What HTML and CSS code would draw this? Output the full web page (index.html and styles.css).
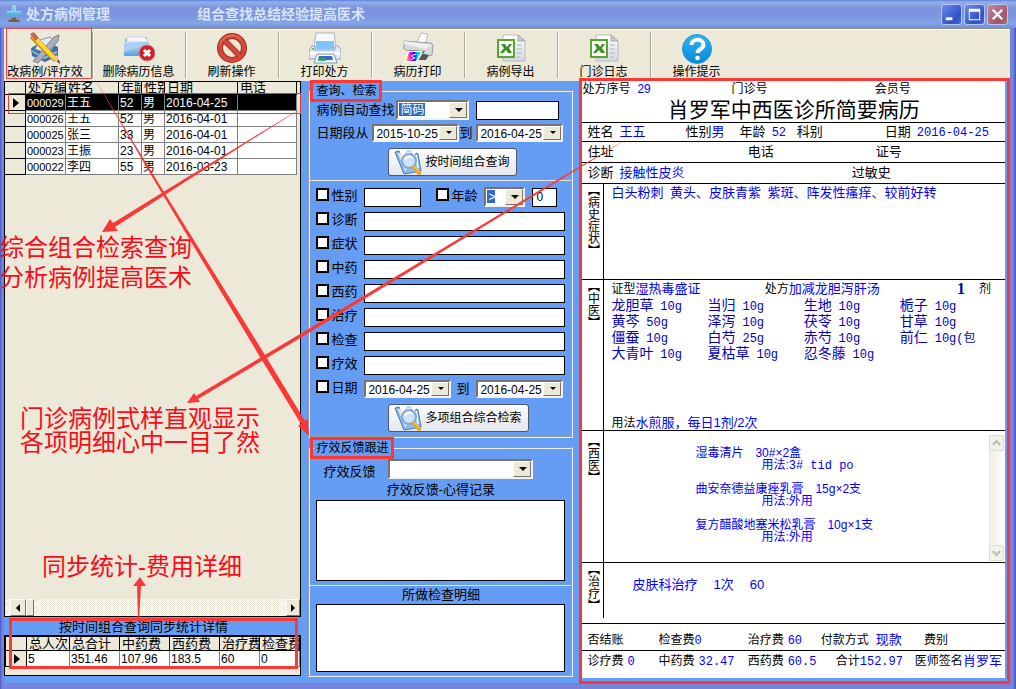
FILE: index.html
```html
<!DOCTYPE html>
<html lang="zh-CN">
<head>
<meta charset="utf-8">
<title>处方病例管理</title>
<link rel="stylesheet" href="styles.css">
</head>
<body>
<svg class="defs" aria-hidden="true">
  <defs>
    <linearGradient id="gSheet" x1="0" y1="0" x2="0" y2="1"><stop offset="0" stop-color="#ffffff"/><stop offset="1" stop-color="#d3d8df"/></linearGradient>
    <linearGradient id="gBlue" x1="0" y1="0" x2="0" y2="1"><stop offset="0" stop-color="#cfe6fb"/><stop offset="1" stop-color="#5a9fe0"/></linearGradient>
    <linearGradient id="gHelp" x1="0" y1="0" x2="0" y2="1"><stop offset="0" stop-color="#33b5f4"/><stop offset="1" stop-color="#0389dc"/></linearGradient>
    <linearGradient id="gRain" x1="0" y1="0" x2="1" y2="0"><stop offset="0" stop-color="#ffe600"/><stop offset=".3" stop-color="#f0f"/><stop offset=".55" stop-color="#20f"/><stop offset=".8" stop-color="#0ee"/><stop offset="1" stop-color="#2d2"/></linearGradient>
    <symbol id="excel" viewBox="0 0 32 32">
      <path d="M8 3h15l7 6v20H8z" fill="url(#gSheet)" stroke="#b9bcc0"/>
      <path d="M23 3v6h7z" fill="#c8ccd0" stroke="#a7abb0"/>
      <path d="M22 13h5M22 17h5M22 21h5M22 25h3" stroke="#aeb4ba"/>
      <rect x="3" y="8" width="16" height="17" fill="#fff" stroke="#58a532" stroke-width="2"/>
      <path d="M6 12h4l2 3 2-3h3l-3 4 3 5h-4l-2-3-3 3H5l4-5z" fill="#3d8f22"/>
    </symbol>
    <symbol id="search" viewBox="0 0 28 26">
      <path d="M1 3l4-1 6 17 9-1 2-14 2 1 3 17-17 3z" fill="#8fbbea" stroke="#4674b8"/>
      <path d="M5 4l7 17M22 6l2 13" stroke="#e8f4ff" stroke-width="2"/>
      <path d="M12 7c0-7 6-7 6 0" fill="#edf4fb" stroke="#9bb4cf"/>
      <circle cx="15" cy="12" r="7" fill="#c9e4fc" stroke="#86a6cc" stroke-width="2"/>
      <path d="M11 11c1-4 5-4 7-2" fill="none" stroke="#fff" stroke-width="2"/>
      <path d="M20 18l5 6" stroke="#e9a325" stroke-width="4" stroke-linecap="round"/>
      <path d="M20 17l5 6" stroke="#ffe08a"/>
    </symbol>
  </defs>
</svg>
<div class="window">
  <header class="titlebar">
    <svg class="app-icon" viewBox="0 0 16 16"><path d="M1 5h5V0h4v5h5v4h-5v4H6V9H1z" fill="#5cb4dc"/><path d="M2 6h5V1h2v5h5" fill="none" stroke="#b5e2f4"/><path d="M6 11h4v2h3v2H3v-2h3z" fill="#7b6039"/></svg>
    <h1 class="app-name">处方病例管理</h1>
    <span class="app-slogan">组合查找总结经验提高医术</span>
    <div class="window-buttons">
      <button class="win-btn" aria-label="最小化"><svg viewBox="0 0 20 20"><path d="M4 13h7v3H4z" fill="#fff"/></svg></button>
      <button class="win-btn" aria-label="最大化"><svg viewBox="0 0 20 20"><path d="M4 4h12v12H4zM5 7v8h10V7z" fill="#fff" fill-rule="evenodd"/></svg></button>
      <button class="win-btn win-close" aria-label="关闭"><svg viewBox="0 0 20 20"><path d="M5 5l10 10M15 5L5 15" stroke="#fff" stroke-width="2.4"/></svg></button>
    </div>
  </header>

  <nav class="toolbar">
    <button class="tool tool-marked">
      <svg viewBox="0 0 32 32"><path d="M2 16l12-7 15 6v9l-13 6-13-6z" fill="#3f6da8"/><path d="M11 8l10-3 7 5-9 12-13-5z" fill="#dfeaf5" stroke="#7797b8"/><path d="M3 19l12 7 13-6" fill="none" stroke="#8fb6df" stroke-width="2"/><path d="M4 29L25 5l5-2-1 6L9 31z" fill="#aab1b8" stroke="#7c838b"/><path d="M3 4L27 28" stroke="#b98713" stroke-width="6"/><path d="M4 4L26 27" stroke="#ffd932" stroke-width="4"/><path d="M1 2l4-2 5 6-4 3z" fill="#cf6450"/><path d="M23 27l5-4 3 9z" fill="#e9c497"/><path d="M28 29l3 3-1-4z" fill="#222"/></svg>
      <span>改病例/评疗效</span></button>
    <button class="tool">
      <svg viewBox="0 0 32 32"><path d="M2 7h8l2-2h12l1 18H2z" fill="#7fb4e8"/><path d="M4 5h18l3 5H4z" fill="#f4f8fc" stroke="#c7d6e6"/><path d="M1 10h25v14H1z" fill="url(#gBlue)"/><path d="M1 12l9-2h16v2L1 20z" fill="#a9d0f5"/><circle cx="24" cy="21" r="8" fill="#c9242b" stroke="#e8777a"/><path d="M21 18l6 6M27 18l-6 6" stroke="#fff" stroke-width="3"/></svg>
      <span>删除病历信息</span></button>
    <button class="tool">
      <svg viewBox="0 0 32 32"><circle cx="16" cy="16" r="12" fill="none" stroke="#a92b20" stroke-width="6"/><circle cx="16" cy="16" r="12" fill="none" stroke="#d2493c" stroke-width="4"/><path d="M8 8l16 16" stroke="#a92b20" stroke-width="6"/><path d="M7 7l18 18" stroke="#d2493c" stroke-width="4"/><path d="M4 12c3-8 13-12 21-5" fill="none" stroke="#ea8b7c"/></svg>
      <span>刷新操作</span></button>
    <button class="tool">
      <svg viewBox="0 0 32 32"><path d="M7 1h18l2 15H5z" fill="#f6f9fd" stroke="#a9b4c4"/><path d="M7 9h18v8H7z" fill="#7fc4f5"/><path d="M3 14h3v4h20v-4h3l3 4v9H0v-9z" fill="#e2e7f2" stroke="#98a3bd"/><path d="M1 20h30v3H1z" fill="#fff"/><path d="M8 22h17l3 9H5z" fill="#f5f8fb" stroke="#8695ad"/><path d="M10 24h13l1 4H9z" fill="#2e71bd"/><path d="M10 26h6l1 3H9z" fill="#35a085"/><circle cx="4" cy="17" r="1" fill="#3b3"/></svg>
      <span>打印处方</span></button>
    <button class="tool">
      <svg viewBox="0 0 32 32"><path d="M15 10l4-9 7 1-3 10z" fill="#fcfcfd" stroke="#b9bbc0"/><path d="M2 9l13 1 14 1 2 2-1 10-8 2L2 17z" fill="#d7d8dc" stroke="#9c9ea5"/><path d="M2 9l28 4-7 4L2 12z" fill="#efeff1"/><path d="M5 18l18 1-7 9h8l3-5" fill="#55565d"/><path d="M6 19h15l-6 12H2z" fill="#fff"/><path d="M7 20h12l-5 9H4z" fill="url(#gRain)"/><path d="M14 22l-5 2 4 2-5 2" fill="none" stroke="#fff"/></svg>
      <span>病历打印</span></button>
    <button class="tool"><svg viewBox="0 0 32 32"><use href="#excel"/></svg><span>病例导出</span></button>
    <button class="tool"><svg viewBox="0 0 32 32"><use href="#excel"/></svg><span>门诊日志</span></button>
    <button class="tool tool-last">
      <svg viewBox="0 0 32 32"><circle cx="16" cy="17" r="14.5" fill="url(#gHelp)" stroke="#2193d6"/><path d="M10.500 13c0-7 12-7 12 0 0 4-6 4-6 8" fill="none" stroke="#fff" stroke-width="4"/><circle cx="16.500" cy="26" r="2.300" fill="#fff"/></svg>
      <span>操作提示</span></button>
  </nav>

  <main class="workspace">
    <section class="left-pane">
      <div class="list-box">
        <table class="grid case-grid">
          <colgroup><col class="c-mark"><col class="c-id"><col class="c-name"><col class="c-age"><col class="c-sex"><col class="c-date"><col class="c-tel"></colgroup>
          <thead><tr><th></th><th>处方编</th><th>姓名</th><th>年龄</th><th>性别</th><th>日期</th><th>电话</th></tr></thead>
          <tbody>
            <tr class="selected"><th><i class="pointer"></i></th><td class="case-id">000029</td><td>王五</td><td>52</td><td>男</td><td>2016-04-25</td><td></td></tr>
            <tr><th></th><td class="case-id">000026</td><td>王五</td><td>52</td><td>男</td><td>2016-04-01</td><td></td></tr>
            <tr><th></th><td class="case-id">000025</td><td>张三</td><td>33</td><td>男</td><td>2016-04-01</td><td></td></tr>
            <tr><th></th><td class="case-id">000023</td><td>王振</td><td>23</td><td>男</td><td>2016-04-01</td><td></td></tr>
            <tr><th></th><td class="case-id">000022</td><td>李四</td><td>55</td><td>男</td><td>2016-03-23</td><td></td></tr>
          </tbody>
        </table>
        <div class="hscroll">
          <button class="scroll-btn to-left" aria-label="向左滚动"></button>
          <span class="scroll-thumb"></span>
          <button class="scroll-btn to-right" aria-label="向右滚动"></button>
        </div>
      </div>
      <div class="stats">
        <h2 class="stats-title">按时间组合查询同步统计详情</h2>
        <div class="stats-box">
          <table class="grid stats-grid">
            <colgroup><col class="c-mark"><col class="s-a"><col class="s-b"><col class="s-b"><col class="s-b"><col class="s-c"><col class="s-d"></colgroup>
            <thead><tr><th></th><th>总人次</th><th>总合计</th><th>中药费</th><th>西药费</th><th>治疗费</th><th>检查费</th></tr></thead>
            <tbody><tr><th><i class="pointer"></i></th><td>5</td><td>351.46</td><td>107.96</td><td>183.5</td><td>60</td><td>0</td></tr></tbody>
          </table>
        </div>
      </div>
    </section>

    <form class="center-pane">
      <fieldset class="group">
        <legend><span class="legend-mark">查询、检索</span></legend>
        <div class="quick">
          <div class="line">
            <label class="lbl" for="code">病例自动查找</label>
            <span class="combo w-code"><select id="code" class="picked"><option>简码</option></select></span>
            <input class="field w-key" type="text" aria-label="查找内容">
          </div>
          <div class="line">
            <label class="lbl lbl-date" for="from">日期段从</label>
            <span class="combo combo-date"><select id="from"><option>2015-10-25</option></select></span>
            <label class="lbl to-tight" for="until">到</label>
            <span class="combo combo-date"><select id="until"><option>2016-04-25</option></select></span>
          </div>
          <button class="action" type="button"><svg viewBox="0 0 28 26"><use href="#search"/></svg>按时间组合查询</button>
        </div>
        <div class="filters">
          <div class="filter">
            <input type="checkbox" id="k1"><label class="lbl" for="k1">性别</label>
            <input class="field w-sex" type="text" aria-label="性别">
            <input type="checkbox" id="k2" class="second"><label class="lbl" for="k2">年龄</label>
            <span class="combo w-op"><select class="picked narrow" aria-label="比较"><option>&gt;</option></select></span>
            <input class="field w-age" type="text" value="0" aria-label="年龄">
          </div>
          <div class="filter"><input type="checkbox" id="k3"><label class="lbl" for="k3">诊断</label><input class="field" type="text" aria-label="诊断"></div>
          <div class="filter"><input type="checkbox" id="k4"><label class="lbl" for="k4">症状</label><input class="field" type="text" aria-label="症状"></div>
          <div class="filter"><input type="checkbox" id="k5"><label class="lbl" for="k5">中药</label><input class="field" type="text" aria-label="中药"></div>
          <div class="filter"><input type="checkbox" id="k6"><label class="lbl" for="k6">西药</label><input class="field" type="text" aria-label="西药"></div>
          <div class="filter"><input type="checkbox" id="k7"><label class="lbl" for="k7">治疗</label><input class="field" type="text" aria-label="治疗"></div>
          <div class="filter"><input type="checkbox" id="k8"><label class="lbl" for="k8">检查</label><input class="field" type="text" aria-label="检查"></div>
          <div class="filter"><input type="checkbox" id="k9"><label class="lbl" for="k9">疗效</label><input class="field" type="text" aria-label="疗效"></div>
          <div class="filter"><input type="checkbox" id="k10"><label class="lbl" for="k10">日期</label>
            <span class="combo combo-date"><select aria-label="起始日期"><option>2016-04-25</option></select></span>
            <label class="lbl to-wide" for="end">到</label>
            <span class="combo combo-date"><select id="end"><option>2016-04-25</option></select></span>
          </div>
          <button class="action" type="button"><svg viewBox="0 0 28 26"><use href="#search"/></svg>多项组合综合检索</button>
        </div>
      </fieldset>
      <fieldset class="group group-feedback">
        <legend><span class="legend-mark">疗效反馈跟进</span></legend>
        <div class="feedback">
          <div class="line line-effect">
            <label class="lbl" for="effect">疗效反馈</label>
            <span class="combo w-effect"><select id="effect"><option></option></select></span>
          </div>
          <label class="memo-label" for="memo">疗效反馈-心得记录</label>
          <textarea id="memo" class="memo"></textarea>
        </div>
        <div class="exam">
          <label class="memo-label" for="exam">所做检查明细</label>
          <textarea id="exam" class="memo"></textarea>
        </div>
      </fieldset>
    </form>

    <article class="record">
      <div class="r-ids"><span>处方序号<b class="gap">29</b></span><span>门诊号</span><span>会员号</span></div>
      <h2 class="r-title">肖罗军中西医诊所简要病历</h2>
      <div class="r-row r-person"><span>姓名<b class="gap">王五</b></span><span>性别<b>男</b></span><span>年龄<b class="gap num">52</b></span><span>科别</span><span>日期<b class="gap num">2016-04-25</b></span></div>
      <div class="r-row r-address"><span>住址</span><span>电话</span><span>证号</span></div>
      <div class="r-row r-diag"><span>诊断<b class="gap">接触性皮炎</b></span><span>过敏史</span></div>
      <section class="r-part part-history">
        <h3>【病史症状】</h3>
        <p class="history">白头粉刺&ensp;黄头、皮肤青紫&ensp;紫斑、阵发性瘙痒、较前好转</p>
      </section>
      <section class="r-part part-tcm">
        <h3>【中医】</h3>
        <div class="tcm">
          <div class="tcm-head"><span>证型<b>湿热毒盛证</b></span><span>处方<b>加减龙胆泻肝汤</b></span><strong>1</strong><span>剂</span></div>
          <ul class="herbs">
            <li>龙胆草 <i>10g</i></li><li>当归 <i>10g</i></li><li>生地 <i>10g</i></li><li>栀子 <i>10g</i></li>
            <li>黄芩 <i>50g</i></li><li>泽泻 <i>10g</i></li><li>茯苓 <i>10g</i></li><li>甘草 <i>10g</i></li>
            <li>僵蚕 <i>10g</i></li><li>白芍 <i>25g</i></li><li>赤芍 <i>10g</i></li><li>前仁 <i>10g(包</i></li>
            <li>大青叶 <i>10g</i></li><li>夏枯草 <i>10g</i></li><li>忍冬藤 <i>10g</i></li>
          </ul>
          <p class="usage">用法<b>水煎服，每日1剂/2次</b></p>
        </div>
      </section>
      <section class="r-part part-west">
        <h3>【西医】</h3>
        <dl class="drugs">
          <dt>湿毒清片&emsp;30#×2盒</dt><dd>用法:<span class="dose">3# tid po</span></dd>
          <dt>曲安奈德益康痤乳膏&emsp;15g×2支</dt><dd>用法:外用</dd>
          <dt>复方醋酸地塞米松乳膏&emsp;10g×1支</dt><dd>用法:外用</dd>
        </dl>
        <div class="vscroll">
          <button aria-label="向上滚动" disabled><svg viewBox="0 0 14 14"><path d="M3 9l4-4 4 4" fill="none" stroke="#c4c1b4" stroke-width="2.500"/></svg></button>
          <button aria-label="向下滚动" disabled><svg viewBox="0 0 14 14"><path d="M3 5l4 4 4-4" fill="none" stroke="#c4c1b4" stroke-width="2.500"/></svg></button>
        </div>
      </section>
      <section class="r-part part-cure">
        <h3>【治疗】</h3>
        <p class="cure"><span>皮肤科治疗</span><span>1次</span><span>60</span></p>
      </section>
      <div class="r-fee fee-top"><span>否结账</span><span>检查费<b class="num">0</b></span><span>治疗费<b class="near num">60</b></span><span>付款方式<b class="gap">现款</b></span><span>费别</span></div>
      <div class="r-fee fee-bottom"><span>诊疗费<b class="near num">0</b></span><span>中药费<b class="near num">32.47</b></span><span>西药费<b class="near num">60.5</b></span><span>合计<b class="num">152.97</b></span><span>医师签名<b>肖罗军</b></span></div>
    </article>
  </main>

  <svg class="arrows" viewBox="0 0 1016 689" preserveAspectRatio="none" aria-hidden="true">
    <rect x="8.500" y="93.500" width="292" height="20" fill="none" stroke="#e03a3e"/>
    <path d="M93 76L154 180 260 357 301 424 298 426 309 436 308 419 305 421 265 355 156 179z"/>
    <path d="M310 103L188 180l-73 47 3 4-16 1 8-13 3 4 73-45z"/>
    <path d="M632 136L560 180 302 337 198 399l2 3-13 1 7-10 2 3L300 334 560 178z"/>
    <path d="M138 620l-1-34h-4l7-9 6 9h-5l-2 34z"/>
  </svg>
  <p class="note note-search">综合组合检索查询<br>分析病例提高医术</p>
  <p class="note note-style">门诊病例式样直观显示<br>各项明细心中一目了然</p>
  <p class="note note-stats">同步统计-费用详细</p>
</div>
</body>
</html>
```
FILE: styles.css
```css
* { box-sizing: border-box; }

body {
  margin: 0;
  font: 12px/16px "Liberation Sans", "Noto Sans CJK SC", sans-serif;
  color: #000;
}

h1, h2, h3, p, ul, dl, dd { margin: 0; padding: 0; font-weight: normal; }
ul { list-style: none; }
b { font-weight: normal; color: #00f; }
button, input, select, textarea { font: inherit; color: inherit; margin: 0; }
button { padding: 0; cursor: pointer; }
.defs { position: absolute; width: 0; height: 0; }

.window {
  position: relative;
  display: flex;
  flex-direction: column;
  min-height: 100vh;
  padding: 0 6px 6px 4px;
  overflow: hidden;
  background: linear-gradient(90deg, #4a55c0 0, #7585dc 2px, #7585dc calc(100% - 3px), #4a4fb8 100%);
  border-bottom: 1px solid #60627c;
}

/* title bar */
.titlebar {
  display: flex;
  align-items: center;
  height: 28px;
  margin: 0 -6px 0 -4px;
  padding: 0 8px 0 5px;
  background: linear-gradient(#5b83dc 0, #94afe8 2px, #7b93dc 8px, #7b96df 16px, #84a5ea 23px, #7490dc 28px);
  color: #d8e4f8;
  font-size: 14px;
}
.app-icon { width: 18px; height: 18px; margin-right: 3px; }
.app-name, .app-slogan { font-size: 14px; font-weight: bold; }
.app-slogan { margin-left: 87px; }
.window-buttons { display: flex; gap: 2px; margin-left: auto; }
.win-btn {
  width: 21px;
  height: 21px;
  border: 1px solid #b9c7f0;
  border-radius: 3px;
  background: linear-gradient(135deg, #6d8df0, #3050c8 70%, #4a68dc);
}
.win-btn svg { display: block; width: 19px; height: 19px; }
.win-close { background: linear-gradient(135deg, #c58a97, #a4566a 70%, #b06a7c); }

/* toolbar */
.toolbar {
  display: flex;
  height: 53px;
  border-top: 1px solid #8f8f88;
  box-shadow: inset 0 1px #fff;
  background: #ece9d8;
  padding-top: 2px;
}
.tool {
  position: relative;
  display: flex;
  flex-direction: column;
  align-items: center;
  width: 93px;
  padding-right: 4px;
  border: 0;
  background: none;
  white-space: nowrap;
}
.tool svg { width: 32px; height: 32px; margin-top: 1px; }
.tool::after {
  content: "";
  position: absolute;
  right: 0;
  top: 1px;
  bottom: 3px;
  border-left: 1px solid #aca899;
  border-right: 1px solid #fff;
}
.tool-last::after { display: none; }
.tool-marked { width: 90px; padding-right: 8px; }
.tool-marked::before {
  content: "";
  position: absolute;
  inset: -3px 2px 2px 2px;
  border: 1px solid #f04048;
}

/* three panes */
.workspace {
  flex: 1;
  display: grid;
  grid-template-columns: minmax(0, 297fr) 265px minmax(0, 424fr);
  column-gap: 7px;
  padding-right: 5px;
  background: #659df5;
}

.left-pane { display: flex; flex-direction: column; padding-bottom: 7px; }
.list-box {
  flex: 1;
  display: flex;
  flex-direction: column;
  justify-content: space-between;
  border: 1px solid #000;
  background: #ece9d8;
}
.grid { width: 100%; table-layout: fixed; border-collapse: collapse; }
.grid th, .grid td {
  height: 16px;
  padding: 0 1px;
  border: 1px solid #808080;
  background: #fff;
  line-height: 12px;
  text-align: left;
  font-weight: normal;
  white-space: nowrap;
  overflow: hidden;
}
.grid th { border-color: #000; background: #ece9d8; }
.grid thead th { height: 13px; font-size: 13px; padding-left: 2px; }
.grid .case-id { font-size: 11px; }
.case-grid { width: calc(100% - 2px); margin-top: -1px; margin-left: -1px; }
.grid .selected td { background: #000; color: #fff; }
.pointer {
  display: block;
  width: 0;
  margin-left: 7px;
  border-left: 6px solid #000;
  border-top: 5px solid transparent;
  border-bottom: 5px solid transparent;
}
.c-mark { width: 21px; }
.c-id { width: 40px; }
.c-name { width: 53px; }
.c-age, .c-sex { width: 23px; }
.c-date { width: 73px; }
.s-a { width: 43px; }
.s-b { width: 50px; }
.s-c { width: 40px; }
.stats-grid thead th { height: 14px; }

.hscroll {
  display: flex;
  height: 17px;
  padding-left: 5px;
  background: repeating-conic-gradient(#fff 0 25%, #ece9d8 0 50%) 0 0 / 2px 2px;
}
.scroll-btn, .scroll-thumb {
  width: 16px;
  background: #ece9d8;
  border: 1px solid;
  border-color: #fff #77756a #77756a #fff;
}
.scroll-thumb { width: 8px; }
.to-right { margin-left: auto; width: 14px; }
.scroll-btn::before {
  content: "";
  display: block;
  width: 0;
  margin: 0 auto;
  border: 4px solid transparent;
}
.to-left::before { border-left-width: 0; border-right-color: #000; }
.to-right::before { border-right-width: 0; border-left-color: #000; }

.stats { position: relative; }
.stats::after {
  content: "";
  position: absolute;
  inset: 1px 3px 7px 5px;
  border: 3px solid #fb3838;
}
.stats-title { font-size: 13px; line-height: 20px; height: 18px; padding-left: 55px; white-space: nowrap; }
.stats-box { height: 41px; border: 1px solid #000; background: #ece9d8; }

/* search form */
.center-pane { display: flex; flex-direction: column; gap: 1px; padding: 1px 0 6px; font-size: 13px; }
.group {
  min-width: 0;
  margin: 0;
  padding: 0;
  border: 2px groove #f0eee4;
  display: flex;
  flex-direction: column;
}
.group-feedback { flex: 1; }
legend { padding: 0; margin-left: 4px; height: 18px; font-size: 12px; }
.legend-mark {
  position: relative;
  display: block;
  padding: 0 4px 0 2px;
  line-height: 18px;
  font-size: 12px;
}
.legend-mark::before {
  content: "";
  position: absolute;
  inset: -2px -2px -2px -4px;
  border: 3px solid #fb3838;
}
.quick { padding: 0 5px 4px 6px; border-bottom: 1px solid #ece9d8; }
.line { display: flex; align-items: center; height: 20px; }
.line + .line { margin-top: 4px; height: 18px; }
.lbl { line-height: 18px; white-space: nowrap; }
.lbl-date { margin-right: 4px; }
.combo { position: relative; display: block; height: 20px; }
.combo select {
  appearance: none;
  display: block;
  width: 100%;
  height: 100%;
  padding: 0 0 0 2px;
  border: 2px solid;
  border-color: #77756a #f4f2e8 #f4f2e8 #77756a;
  border-radius: 0;
  background-color: #fff;
  font-size: 12px;
}
.combo::after {
  content: "";
  position: absolute;
  top: 2px;
  right: 2px;
  bottom: 2px;
  width: 16px;
  border: 1px solid;
  border-color: #fff #77756a #77756a #fff;
  background: #ece9d8;
  pointer-events: none;
}
.combo::before {
  content: "";
  position: absolute;
  z-index: 1;
  right: 6px;
  top: 8px;
  border: 4px solid transparent;
  border-bottom-width: 0;
  border-top-color: #000;
  pointer-events: none;
}
.combo-date { width: 87px; height: 18px; }
.combo-date::before { right: 7px; top: 7px; border-width: 3px 3px 0; }
.combo select.picked {
  color: #fff;
  background: linear-gradient(#316ac5, #316ac5) 1px 1px / 26px 13px no-repeat #fff;
}
.combo select.narrow { background-size: 8px 13px; }
.w-code { width: 73px; margin-left: 2px; }
.w-effect { width: 145px; }
.w-op { width: 41px; margin-left: 7px; }
.field {
  flex: 1;
  min-width: 0;
  height: 19px;
  padding: 0 3px;
  border: 1px solid #000;
  background: #fff;
  font-size: 12px;
}
.field.w-key { flex: none; width: 83px; margin-left: 7px; }
.field.w-sex { flex: none; width: 57px; }
.field.w-age { flex: none; width: 25px; margin-left: 7px; }
.to-tight { width: 17px; }
.to-wide { width: 25px; padding-left: 5px; }
.action {
  display: flex;
  align-items: center;
  height: 28px;
  margin-left: 72px;
  padding: 0 7px 0 5px;
  border: 1px solid #51586b;
  border-radius: 3px;
  background: linear-gradient(#fdfdfd, #e4e6ea);
  font-size: 12px;
  white-space: nowrap;
}
.action svg { width: 28px; height: 26px; margin-right: 3px; }
.quick .action { margin-top: 6px; }
.filters { padding: 4px 6px 4px 6px; }
.filter { display: flex; align-items: center; height: 24px; }
.filter input[type="checkbox"] {
  appearance: none;
  width: 13px;
  height: 13px;
  margin: 0 2px 6px 0;
  border: 2px solid #000;
  background: #fff;
}
.filter .lbl { width: 33px; padding-bottom: 3px; }
.filter .second + .lbl { width: 26px; }
.filter input.second { margin-left: 15px; }
.filter .to-wide { width: 25px; padding-bottom: 0; }
.filters .action { margin-top: 3px; }
.feedback { padding: 0 6px 4px; border-bottom: 1px solid #ece9d8; }
.feedback .line-effect { height: 23px; padding-left: 7px; gap: 13px; }
.line-effect .lbl { padding-top: 6px; }
.memo-label { display: block; line-height: 20px; text-align: center; }
.memo {
  display: block;
  width: 100%;
  height: 81px;
  border: 1px solid #000;
  border-radius: 0;
  background: #fff;
  resize: none;
}
.exam { flex: 1; display: flex; flex-direction: column; padding: 0 6px 3px; }
.exam .memo-label { line-height: 18px; }
.exam .memo { flex: 1; min-height: 68px; }

/* case record */
.record {
  position: relative;
  display: flex;
  flex-direction: column;
  margin: 0 0 5px 2px;
  background: #fff;
}
.record::after {
  content: "";
  position: absolute;
  inset: -3px -5px -6px -3px;
  border: 3px solid #fb3838;
  pointer-events: none;
}
.record span, .record p, .record b { white-space: nowrap; }
.record .num { font: 12px/12px "Liberation Mono", monospace; }
.gap { margin-left: 7px; }
.near { margin-left: 4px; }
.r-ids {
  display: grid;
  grid-template-columns: minmax(0, 149fr) minmax(0, 143fr) minmax(0, 130fr);
  line-height: 16px;
}
.r-title { font-size: 21px; line-height: 25px; text-align: center; }
.r-row {
  display: grid;
  padding-left: 5px;
  border-top: 1px solid #000;
  font-size: 13px;
  line-height: 19px;
}
.r-person {
  grid-template-columns: minmax(0, 98fr) minmax(0, 54fr) minmax(0, 57fr) minmax(0, 88fr) minmax(0, 120fr);
  line-height: 18px;
}
.r-address { grid-template-columns: minmax(0, 160fr) minmax(0, 128fr) minmax(0, 129fr); line-height: 20px; }
.r-diag { grid-template-columns: minmax(0, 264fr) minmax(0, 153fr); line-height: 20px; }
.r-diag .gap, .r-person .gap { margin-left: 6px; }
.r-part {
  display: grid;
  grid-template-columns: 22px minmax(0, 1fr);
  border-top: 1px solid #000;
}
.r-part h3 {
  writing-mode: vertical-rl;
  width: 22px;
  padding: 0 3px;
  border-right: 1px solid #000;
  font-size: 12px;
  line-height: 16px;
}
.part-history { flex: 96 0 96px; }
.history { padding-left: 7px; font-size: 13px; line-height: 17px; color: #00f; }
.part-tcm { flex: 150 0 150px; }
.tcm { display: flex; flex-direction: column; padding: 1px 0 0 7px; }
.tcm-head {
  display: grid;
  grid-template-columns: minmax(0, 153fr) minmax(0, 192fr) minmax(0, 22fr) minmax(0, 26fr);
  line-height: 16px;
}
.tcm-head b, .usage b { font-size: 13px; }
.tcm-head strong { font: bold 16px/16px "Liberation Serif", serif; color: #0000a8; }
.herbs {
  display: grid;
  grid-template-columns: repeat(3, minmax(0, 96fr)) minmax(0, 105fr);
  grid-auto-rows: 16px;
  font-size: 14px;
  line-height: 16px;
  color: #0000c0;
  white-space: nowrap;
}
.herbs i { margin-left: 3px; font: 12px/12px "Liberation Mono", "Noto Sans CJK SC", monospace; }
.usage { margin-top: auto; line-height: 14px; }
.part-west { grid-template-columns: 22px minmax(0, 1fr) 16px; flex: 132 0 132px; }
.part-west h3 { padding-top: 4px; }
.drugs { padding: 16px 0 0 91px; line-height: 12px; color: #00f; white-space: nowrap; }
.drugs dd { height: 12px; padding-left: 66px; margin-bottom: 12px; }
.dose { font: 12px/12px "Liberation Mono", monospace; }
.vscroll {
  display: flex;
  flex-direction: column;
  justify-content: space-between;
  margin: 4px 1px 1px 0;
  background: linear-gradient(90deg, #eeede5, #fefefb);
}
.vscroll button {
  width: 15px;
  height: 16px;
  border: 1px solid #dddccf;
  border-radius: 2px;
  background: #f3f2ea;
}
.vscroll svg { display: block; width: 13px; height: 14px; }
.part-cure { flex: 62 0 61px; }
.part-cure h3 { margin-bottom: 5px; }
.cure { display: flex; gap: 16px; padding: 14px 0 0 28px; font-size: 13px; color: #00f; }
.r-fee {
  display: grid;
  padding-left: 5px;
  border-top: 1px solid #000;
}
.r-fee b { font-size: 13px; }
.fee-top {
  grid-template-columns: minmax(0, 71fr) minmax(0, 89fr) minmax(0, 73fr) minmax(0, 103fr) minmax(0, 81fr);
  padding-top: 6px;
  line-height: 20px;
}
.fee-bottom {
  grid-template-columns: minmax(0, 71fr) minmax(0, 89fr) minmax(0, 88fr) minmax(0, 79fr) minmax(0, 90fr);
  padding-bottom: 7px;
  line-height: 20px;
}

/* call-outs over the window */
.arrows {
  position: absolute;
  inset: 0;
  width: 100%;
  height: 100%;
  fill: #fb3838;
  pointer-events: none;
}
.note {
  position: absolute;
  color: #fb0a1a;
  font-size: 24px;
  line-height: 24px;
  white-space: nowrap;
  pointer-events: none;
}
.note-search { left: 0; top: 233px; line-height: 30px; }
.note-style { left: 20px; top: 407px; }
.note-stats { left: 42px; top: 555px; }
```
